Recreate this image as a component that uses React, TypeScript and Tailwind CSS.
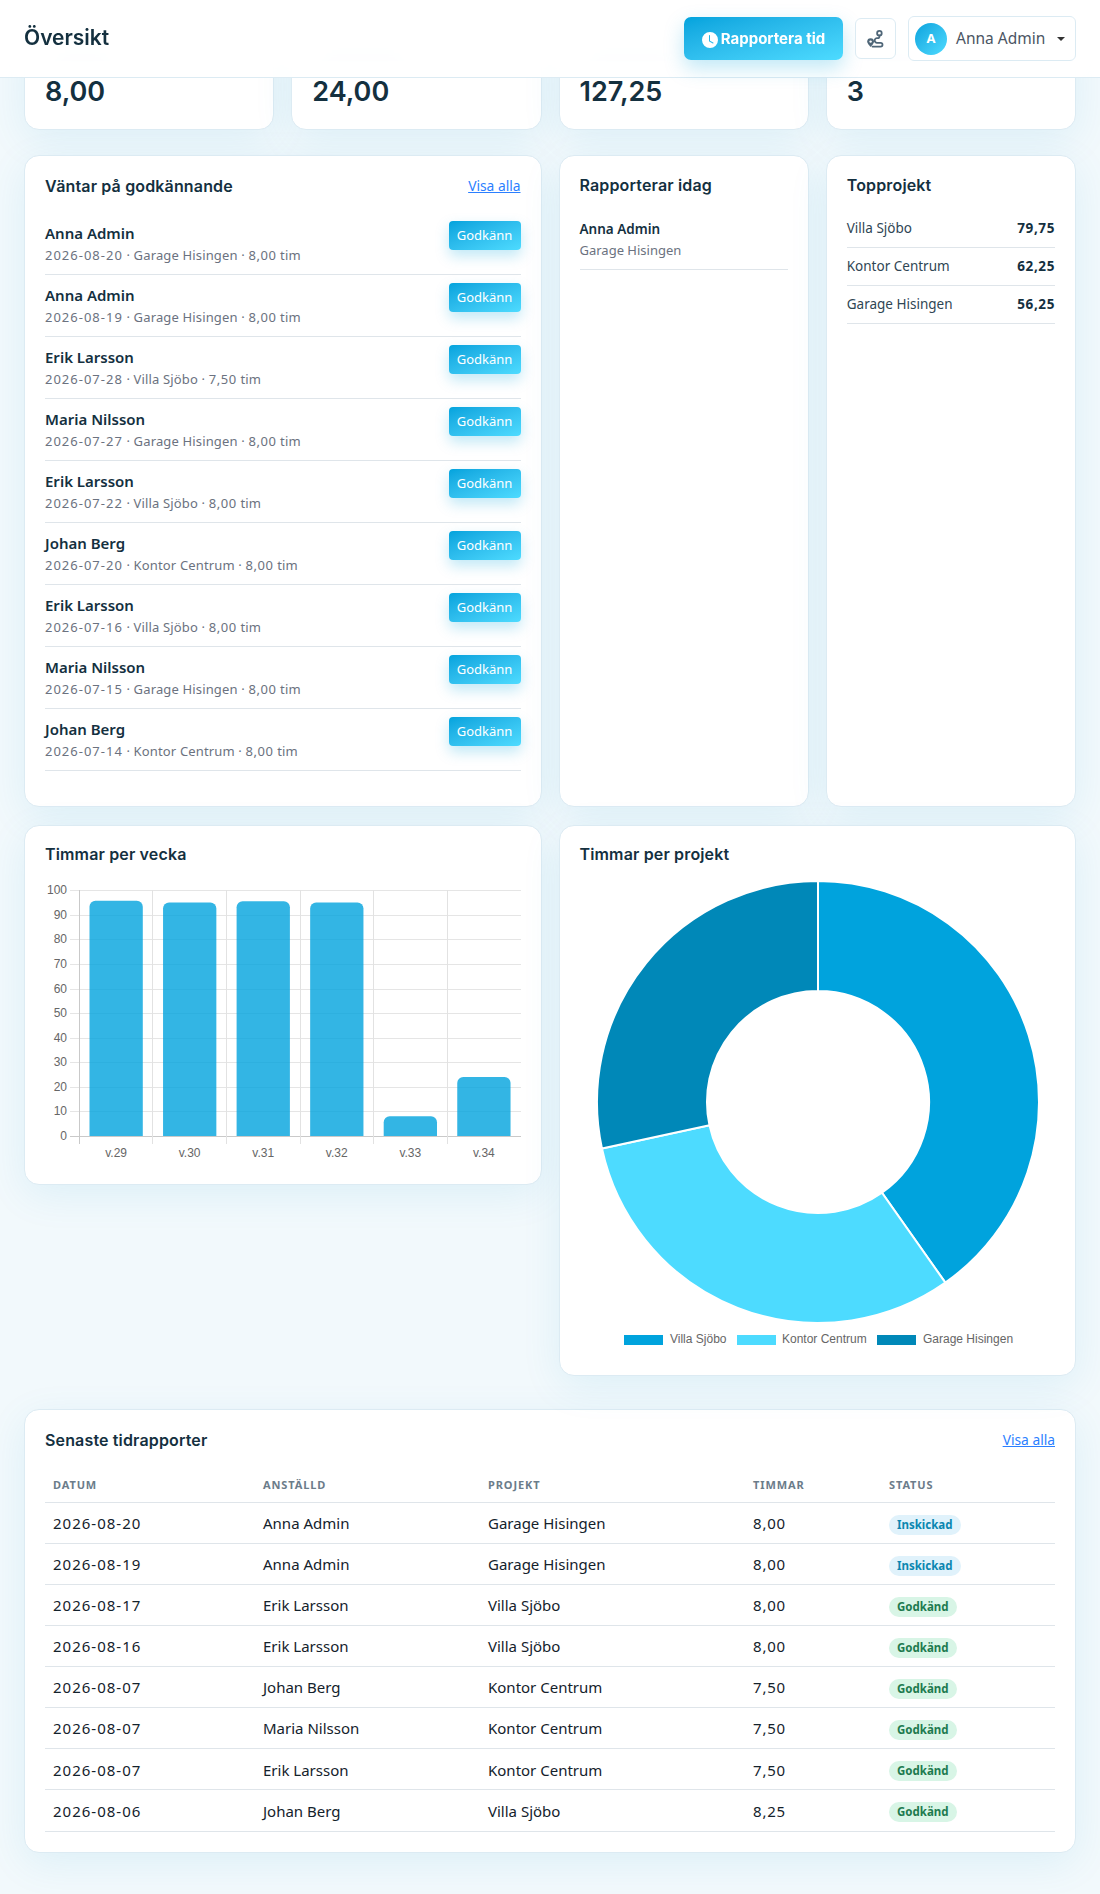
import { BsClockFill } from "react-icons/bs";

const heading = "font-['Inter',sans-serif]";

const stats = [
  { value: "8,00", smudge: "w-[75px]" },
  { value: "24,00", smudge: "w-[102px]" },
  { value: "127,25", smudge: "w-[102px]" },
  { value: "3", smudge: "w-[80px]" },
];

const pending = [
  ["Anna Admin", "2026-08-20", "Garage Hisingen", "8,00"],
  ["Anna Admin", "2026-08-19", "Garage Hisingen", "8,00"],
  ["Erik Larsson", "2026-07-28", "Villa Sjöbo", "7,50"],
  ["Maria Nilsson", "2026-07-27", "Garage Hisingen", "8,00"],
  ["Erik Larsson", "2026-07-22", "Villa Sjöbo", "8,00"],
  ["Johan Berg", "2026-07-20", "Kontor Centrum", "8,00"],
  ["Erik Larsson", "2026-07-16", "Villa Sjöbo", "8,00"],
  ["Maria Nilsson", "2026-07-15", "Garage Hisingen", "8,00"],
  ["Johan Berg", "2026-07-14", "Kontor Centrum", "8,00"],
];

const topProjects = [
  ["Villa Sjöbo", "79,75"],
  ["Kontor Centrum", "62,25"],
  ["Garage Hisingen", "56,25"],
];

const reports = [
  ["2026-08-20", "Anna Admin", "Garage Hisingen", "8,00", "Inskickad"],
  ["2026-08-19", "Anna Admin", "Garage Hisingen", "8,00", "Inskickad"],
  ["2026-08-17", "Erik Larsson", "Villa Sjöbo", "8,00", "Godkänd"],
  ["2026-08-16", "Erik Larsson", "Villa Sjöbo", "8,00", "Godkänd"],
  ["2026-08-07", "Johan Berg", "Kontor Centrum", "7,50", "Godkänd"],
  ["2026-08-07", "Maria Nilsson", "Kontor Centrum", "7,50", "Godkänd"],
  ["2026-08-07", "Erik Larsson", "Kontor Centrum", "7,50", "Godkänd"],
  ["2026-08-06", "Johan Berg", "Villa Sjöbo", "8,25", "Godkänd"],
];

const weeks = [
  { label: "v.29", hours: 95.75 },
  { label: "v.30", hours: 95 },
  { label: "v.31", hours: 95.5 },
  { label: "v.32", hours: 95 },
  { label: "v.33", hours: 8 },
  { label: "v.34", hours: 24 },
];

const slices = [
  { label: "Villa Sjöbo", hours: 79.75, color: "#00a3dd", x: 623, w: 39, tx: 669 },
  { label: "Kontor Centrum", hours: 62.25, color: "#4ddbff", x: 736, w: 39, tx: 781 },
  { label: "Garage Hisingen", hours: 56.25, color: "#0088b8", x: 876, w: 39, tx: 922 },
];

const cardClass =
  "rounded-[15px] border border-[#dcebf3] bg-white shadow-[0_10px_40px_rgba(0,140,200,0.09)]";

function CardTitle({ children }: { children: string }) {
  return (
    <h2 className={`${heading} text-[16px] font-semibold leading-5 tracking-[0.15px] text-[#14303f]`}>{children}</h2>
  );
}

function RouteIcon() {
  return (
    <svg width="17" height="18" viewBox="0 0 17 18" fill="none" stroke="#4f6678" strokeWidth="1.8">
      <circle cx="12.4" cy="3.2" r="2.3" />
      <path d="M12.4 5.6v1.2c0 1-0.8 1.4-1.8 1.4h-0.6a2.3 2.3 0 0 0 0 4.6h3.6a1.9 1.9 0 0 1 0 3.8H5.5" strokeLinecap="round" />
      <path d="M3.6 17s-3.4-3-3.4-5.4a3.4 3.4 0 0 1 6.8 0C7 14 3.6 17 3.6 17z" fill="#4f6678" stroke="none" />
      <circle cx="3.6" cy="11.6" r="1.2" fill="#fff" stroke="none" />
    </svg>
  );
}

function BarChart() {
  const yFor = (v: number) => 1136 - v * 2.457;
  const xs = [79.5, 152.5, 226.5, 300.5, 373.5, 447.5];
  const ticks = [0, 10, 20, 30, 40, 50, 60, 70, 80, 90, 100];
  return (
    <svg width="477" height="285" viewBox="45 880 477 285" className="block">
      {ticks.map((t) => (
        <g key={t}>
          <line
            x1="70"
            x2="521"
            y1={Math.round(yFor(t)) + 0.5}
            y2={Math.round(yFor(t)) + 0.5}
            stroke={t === 0 ? "#c9c9c9" : "#e5e5e5"}
          />
          <text x="67" y={yFor(t) + 4} textAnchor="end" fontSize="12" fill="#666" fontFamily="Liberation Sans">
            {t}
          </text>
        </g>
      ))}
      {xs.map((x, i) => (
        <line key={x} x1={x} x2={x} y1="890" y2="1144" stroke={i === 0 ? "#c9c9c9" : "#e2e2e2"} />
      ))}
      {weeks.map((w, i) => {
        const x = 89.5 + i * 73.55;
        const y = yFor(w.hours);
        return (
          <g key={w.label}>
            <path
              d={`M${x} 1136V${y + 6}a6 6 0 0 1 6 -6H${x + 47.3}a6 6 0 0 1 6 6V1136z`}
              fill="#00a3dd"
              fillOpacity="0.8"
            />
            <text x={x + 26.6} y="1157" textAnchor="middle" fontSize="12" fill="#666" fontFamily="Liberation Sans">
              {w.label}
            </text>
          </g>
        );
      })}
    </svg>
  );
}

function Donut() {
  const total = slices.reduce((sum, s) => sum + s.hours, 0);
  const cx = 817;
  const cy = 1102;
  const outer = 221;
  const inner = 111;
  let angle = -Math.PI / 2;
  const point = (r: number, a: number) => `${cx + r * Math.cos(a)} ${cy + r * Math.sin(a)}`;
  return (
    <svg width="476" height="481" viewBox="579 874 476 481" className="block">
      {slices.map((s) => {
        const start = angle;
        const end = angle + (s.hours / total) * Math.PI * 2;
        angle = end;
        const large = end - start > Math.PI ? 1 : 0;
        return (
          <path
            key={s.label}
            d={`M${point(outer, start)}A${outer} ${outer} 0 ${large} 1 ${point(outer, end)}L${point(inner, end)}A${inner} ${inner} 0 ${large} 0 ${point(inner, start)}z`}
            fill={s.color}
            stroke="#fff"
            strokeWidth="2"
          />
        );
      })}
      {slices.map((s) => (
        <g key={s.label}>
          <rect x={s.x} y="1335" width={s.w} height="10" fill={s.color} />
          <text x={s.tx} y="1343" fontSize="12" fill="#666" fontFamily="Liberation Sans">
            {s.label}
          </text>
        </g>
      ))}
    </svg>
  );
}

export default function App() {
  return (
    <div className="relative h-[1894px] overflow-hidden bg-[#f2f9fc] font-['Noto_Sans',sans-serif] text-[#14303f]">
      <header className="absolute inset-x-0 top-0 z-10 flex h-[78px] items-center justify-between border-b border-[#dcebf3] bg-white/95 pl-[24px] pr-[24px] backdrop-blur-md">
        <h1 className={`${heading} -mt-[1px] text-[21px] font-semibold text-[#14303f]`}>Översikt</h1>
        <div className="flex items-center gap-[12px]">
          <button className={`${heading} flex h-[43px] w-[159px] items-center justify-center gap-[3px] rounded-[7px] bg-gradient-to-br from-[#00a3dd] to-[#4ddbff] pt-[2px] text-[15px] font-bold text-white shadow-[0_8px_20px_rgba(0,163,221,0.25)]`}>
            <BsClockFill className="text-[16px]" />
            Rapportera tid
          </button>
          <button className="flex h-[41px] w-[41px] items-center justify-center rounded-[6px] border border-[#dcebf3] bg-white">
            <RouteIcon />
          </button>
          <button className="flex h-[45px] w-[168px] items-center rounded-[6px] border border-[#dcebf3] bg-white pl-[6px]">
            <span className="flex h-[32px] w-[32px] items-center justify-center rounded-full bg-gradient-to-br from-[#00a3dd] to-[#4ddbff] text-[13px] font-bold text-white">
              A
            </span>
            <span className="ml-[9px] text-[15.5px] text-[#4b5563]">Anna Admin</span>
            <span className="ml-[12px] h-0 w-0 border-x-[4px] border-t-[4px] border-x-transparent border-t-[#333]" />
          </button>
        </div>
      </header>

      <main className="pb-[42px] pl-[24px] pr-[24px] pt-[24px]">
        <div className="grid grid-cols-4 gap-x-[17px]">
          {stats.map((s) => (
            <div key={s.value} className={`${cardClass} h-[106px] px-5 pt-[25px]`}>
              <div className={`${s.smudge} h-[11px] rounded-sm bg-[#c8ced3]`} />
              <div className={`${heading} mt-[13px] text-[27px] font-semibold leading-[36px] text-[#14303f]`}>{s.value}</div>
            </div>
          ))}
        </div>

        <div className="mt-[25px] grid h-[652px] grid-cols-4 gap-x-[17px]">
          <section className={`${cardClass} col-span-2 px-5 pt-[20px]`}>
            <div className="flex h-[37px] items-start justify-between">
              <CardTitle>Väntar på godkännande</CardTitle>
              <a className="text-[13.8px] leading-5 text-[#2b7fff] underline">Visa alla</a>
            </div>
            {pending.map(([name, date, project, hours], i) => (
              <div key={i} className="flex h-[62px] justify-between border-b border-[#dfe5ea] pt-[8px]">
                <div className="pt-[1px]">
                  <div className="text-[15px] font-semibold leading-[22px] text-[#14303f]">{name}</div>
                  <div className="text-[13px] leading-[22px] tracking-[0.15px] text-[#6b7280]">
                    <span className="tracking-[1px]">{date}</span> · {project} · <span className="tracking-[0.6px]">{hours}</span> tim
                  </div>
                </div>
                <button className="h-[29px] w-[72px] rounded-[4px] bg-gradient-to-br from-[#00a3dd] to-[#4ddbff] text-[13px] text-white shadow-[0_6px_14px_rgba(0,163,221,0.25)]">
                  Godkänn
                </button>
              </div>
            ))}
          </section>

          <section className={`${cardClass} px-5 pt-[19px]`}>
            <CardTitle>Rapporterar idag</CardTitle>
            <div className="mt-[24px] border-b border-[#dfe5ea] pb-[8px]">
              <div className="text-[13.5px] font-semibold leading-5">Anna Admin</div>
              <div className="text-[13px] leading-[22px] text-[#6b7280]">Garage Hisingen</div>
            </div>
          </section>

          <section className={`${cardClass} px-5 pt-[19px]`}>
            <CardTitle>Topprojekt</CardTitle>
            <div className="mt-[15px]">
              {topProjects.map(([name, hours]) => (
                <div key={name} className="flex h-[38px] items-center justify-between border-b border-[#dfe5ea] text-[13.5px]">
                  <span className="text-[#2f4654]">{name}</span>
                  <span className="font-bold tracking-[0.6px]">{hours}</span>
                </div>
              ))}
            </div>
          </section>
        </div>

        <div className="mt-[18px] grid grid-cols-2 items-start gap-x-[17px]">
          <section className={`${cardClass} px-5 pb-[19px] pt-[18px]`}>
            <div className="mb-[16px]">
              <CardTitle>Timmar per vecka</CardTitle>
            </div>
            <BarChart />
          </section>
          <section className={`${cardClass} px-5 pb-[20px] pt-[18px]`}>
            <div className="mb-[10px]">
              <CardTitle>Timmar per projekt</CardTitle>
            </div>
            <Donut />
          </section>
        </div>

        <section className={`${cardClass} mt-[33px] px-5 pb-[20px] pt-[20px]`}>
          <div className="flex h-[36px] items-start justify-between">
            <CardTitle>Senaste tidrapporter</CardTitle>
            <a className="text-[13.8px] leading-5 text-[#2b7fff] underline">Visa alla</a>
          </div>
          <table className="w-full table-fixed border-collapse text-left">
            <thead>
              <tr className="h-[36px] border-b border-[#dfe5ea] text-[11px] font-bold uppercase tracking-[0.08em] text-[#6b7c8a]">
                <th className="w-[210px] px-2 pt-[2px]">Datum</th>
                <th className="w-[225px] px-2 pt-[2px]">Anställd</th>
                <th className="w-[265px] px-2 pt-[2px]">Projekt</th>
                <th className="w-[136px] px-2 pt-[2px]">Timmar</th>
                <th className="px-2 pt-[2px]">Status</th>
              </tr>
            </thead>
            <tbody>
              {reports.map((r, i) => (
                <tr key={i} className="h-[41.125px] border-b border-[#dfe5ea] text-[15px] text-[#14222c]">
                  <td className="px-2 pt-[1px] tracking-[1px]">{r[0]}</td>
                  <td className="px-2 pt-[1px]">{r[1]}</td>
                  <td className="px-2 pt-[1px]">{r[2]}</td>
                  <td className="px-2 pt-[1px] tracking-[0.8px]">{r[3]}</td>
                  <td className="px-2 pt-[1px]">
                    <span
                      className={
                        r[4] === "Inskickad"
                          ? "inline-block rounded-full bg-[#e0f2fb] px-[8px] text-[11.5px] font-bold leading-5 text-[#0b86b0]"
                          : "inline-block rounded-full bg-[#d8f5e6] px-[8px] text-[11.5px] font-bold leading-5 text-[#1d7a4f]"
                      }
                    >
                      {r[4]}
                    </span>
                  </td>
                </tr>
              ))}
            </tbody>
          </table>
        </section>
      </main>
    </div>
  );
}
